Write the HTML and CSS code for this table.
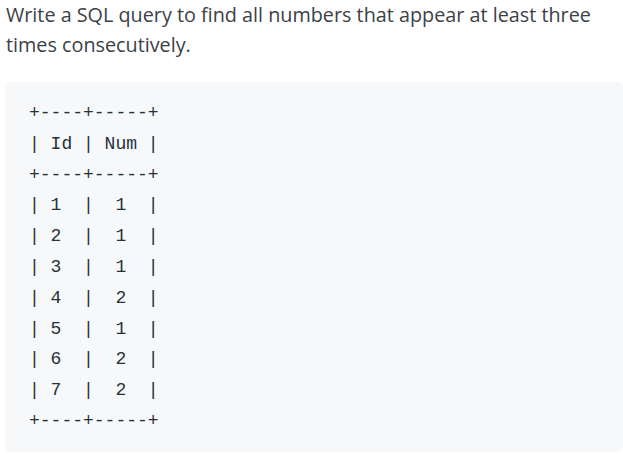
FILE: index.html
```html
<!DOCTYPE html>
<html>
<head>
<meta charset="utf-8">
<link rel="stylesheet" href="styles.css">
</head>
<body>
<div class="content">
<p class="desc">Write a SQL query to find all numbers that appear at least three times consecutively.</p>
<pre class="code">+----+-----+
| Id | Num |
+----+-----+
| 1  |  1  |
| 2  |  1  |
| 3  |  1  |
| 4  |  2  |
| 5  |  1  |
| 6  |  2  |
| 7  |  2  |
+----+-----+</pre>
</div>
</body>
</html>
```
FILE: styles.css
```css
html, body {
  margin: 0;
  padding: 0;
  background: #ffffff;
}
.content {
  padding: 0 0 0 5px;
}
.desc {
  margin: 0;
  padding: 0 0 0 1px;
  font-family: "Open Sans", "Noto Sans", sans-serif;
  font-size: 19.8px;
  line-height: 30px;
  color: #3c4146;
  width: 605px;
}
.code {
  margin: 22px 0 0 0;
  padding: 16px 0 15px 24px;
  background: #f7f8fa;
  border-radius: 5px;
  font-family: "Liberation Mono", monospace;
  font-size: 18px;
  line-height: 30.8px;
  color: #263238;
  box-sizing: border-box;
  height: 370px;
}
```
